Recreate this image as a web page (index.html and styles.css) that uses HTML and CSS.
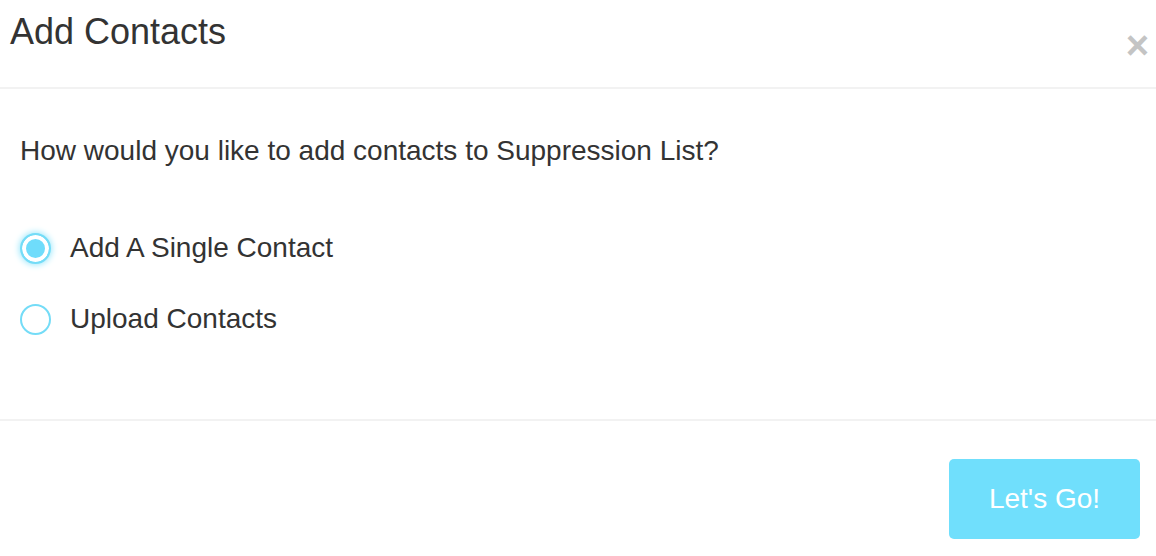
FILE: index.html
```html
<!DOCTYPE html>
<html lang="en">
<head>
	<meta charset="UTF-8">
	<title>Add Contacts</title>
<link rel="stylesheet" href="styles.css">
</head>
<body>
<div class="modal">
	<div class="modal-header">
		<h3>Add Contacts</h3>
		<span class="close">&times;</span>
	</div>
	<div class="modal-body">
		<p class="question">How would you like to add contacts to Suppression List?</p>
		<label class="option">
			<input type="radio" name="mode" checked>
			<span class="dot"></span>
			Add A Single Contact
		</label>
		<label class="option">
			<input type="radio" name="mode">
			<span class="dot"></span>
			Upload Contacts
		</label>
	</div>
	<div class="modal-footer">
		<button class="go">Let's Go!</button>
	</div>
</div>
</body>
</html>
```
FILE: styles.css
```css
body{
	margin:0;
	background:#fff;
	font-family:"Liberation Sans", Arial, sans-serif;
	color:#333;
}
.modal{
	width:1156px;
}
.modal-header{
	height:87px;
	border-bottom:2px solid #f2f2f2;
	display:flex;
	justify-content:space-between;
	padding:0 7px 0 10px;
}
.modal-header h3{
	margin:0;
	padding-top:12px;
	font-size:36px;
	font-weight:normal;
	line-height:40px;
}
.close{
	color:#c4c4c4;
	font-size:40px;
	font-weight:bold;
	line-height:40px;
	padding-top:25px;
}
.modal-body{
	height:332px;
	border-bottom:2px solid #f2f2f2;
	padding:0 20px;
	box-sizing:border-box;
}
.question{
	margin:0;
	padding-top:46px;
	font-size:28px;
	line-height:32px;
	height:62px;
}
.option{
	display:flex;
	align-items:center;
	gap:19px;
	font-size:28px;
	height:40px;
	margin-top:31px;
}
.option input{
	display:none;
}
.dot{
	width:27px;
	height:27px;
	border:2px solid #74dcf7;
	border-radius:50%;
	box-sizing:content-box;
	background:#fff;
}
.option input:checked + .dot{
	background:#6fdcfb;
	box-shadow:inset 0 0 0 4px #fff, 0 0 6px 1px #9fe8fb;
}
.modal-footer{
	display:flex;
	justify-content:flex-end;
	padding:38px 16px 0 0;
}
.go{
	width:191px;
	height:80px;
	border:0;
	border-radius:5px;
	background:#70dffc;
	color:#fff;
	font-family:"Liberation Sans", Arial, sans-serif;
	font-size:28px;
}
```
